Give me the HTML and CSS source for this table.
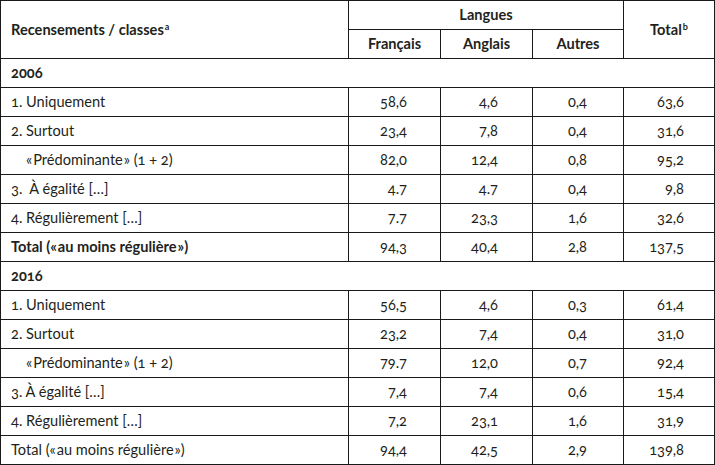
FILE: index.html
```html
<!DOCTYPE html>
<html lang="fr">
<head>
<meta charset="utf-8">
<link rel="stylesheet" href="styles.css">
</head>
<body>
<table class="tbl">
  <colgroup>
    <col class="c-label"><col class="c-num"><col class="c-num"><col class="c-num3"><col class="c-tot">
  </colgroup>
  <thead>
    <tr>
      <th rowspan="2" class="h-label">Recensements / classes<sup>a</sup></th>
      <th colspan="3" class="h-group">Langues</th>
      <th rowspan="2" class="h-total">Total<sup>b</sup></th>
    </tr>
    <tr>
      <th class="h-sub">Français</th>
      <th class="h-sub">Anglais</th>
      <th class="h-sub">Autres</th>
    </tr>
  </thead>
  <tbody>
    <tr class="year"><td colspan="5">2006</td></tr>
    <tr><td class="lbl">1. Uniquement</td><td class="n1">58,6</td><td class="n2">4,6</td><td class="n3">0,4</td><td class="n4">63,6</td></tr>
    <tr><td class="lbl">2. Surtout</td><td class="n1">23,4</td><td class="n2">7,8</td><td class="n3">0,4</td><td class="n4">31,6</td></tr>
    <tr><td class="lbl indent">«&#8202;Prédominante&#8202;» (1 + 2)</td><td class="n1">82,0</td><td class="n2">12,4</td><td class="n3">0,8</td><td class="n4">95,2</td></tr>
    <tr><td class="lbl">3.&nbsp; À égalité […]</td><td class="n1">4.7</td><td class="n2">4.7</td><td class="n3">0,4</td><td class="n4">9,8</td></tr>
    <tr><td class="lbl">4. Régulièrement […]</td><td class="n1">7.7</td><td class="n2">23,3</td><td class="n3">1,6</td><td class="n4">32,6</td></tr>
    <tr class="bold"><td class="lbl">Total («&#8202;au moins régulière&#8202;»)</td><td class="n1">94,3</td><td class="n2">40,4</td><td class="n3">2,8</td><td class="n4">137,5</td></tr>
    <tr class="year"><td colspan="5">2016</td></tr>
    <tr><td class="lbl">1. Uniquement</td><td class="n1">56,5</td><td class="n2">4,6</td><td class="n3">0,3</td><td class="n4">61,4</td></tr>
    <tr><td class="lbl">2. Surtout</td><td class="n1">23,2</td><td class="n2">7,4</td><td class="n3">0,4</td><td class="n4">31,0</td></tr>
    <tr><td class="lbl indent">«&#8202;Prédominante&#8202;» (1 + 2)</td><td class="n1">79.7</td><td class="n2">12,0</td><td class="n3">0,7</td><td class="n4">92,4</td></tr>
    <tr><td class="lbl">3. À égalité […]</td><td class="n1">7,4</td><td class="n2">7,4</td><td class="n3">0,6</td><td class="n4">15,4</td></tr>
    <tr><td class="lbl">4. Régulièrement […]</td><td class="n1">7,2</td><td class="n2">23,1</td><td class="n3">1,6</td><td class="n4">31,9</td></tr>
    <tr><td class="lbl">Total («&#8202;au moins régulière&#8202;»)</td><td class="n1">94,4</td><td class="n2">42,5</td><td class="n3">2,9</td><td class="n4">139,8</td></tr>
  </tbody>
</table>
</body>
</html>
```
FILE: styles.css
```css
html, body {
  margin: 0;
  padding: 0;
  background: #fff;
}
body {
  font-family: Lato, "Open Sans", "Noto Sans", sans-serif;
  font-size: 14.6px;
  color: #231f20;
  font-variant-numeric: oldstyle-nums;
}
.tbl {
  border-collapse: collapse;
  table-layout: fixed;
  width: 714px;
}
.c-label { width: 348px; }
.c-num { width: 92px; }
.c-num3 { width: 91px; }
.c-tot { width: 91px; }
.tbl th, .tbl td {
  border: 1px solid #1a1a1a;
  height: 29px;
  padding: 0;
  box-sizing: border-box;
  line-height: 16px;
}
.tbl th {
  font-weight: bold;
  text-align: center;
}
.tbl th.h-label {
  text-align: left;
  padding-left: 10px;
}
sup {
  font-size: 9px;
  line-height: 0;
  vertical-align: 5px;
  margin-left: 1px;
}
.year td {
  font-weight: bold;
  padding-left: 10px;
}
.lbl {
  padding-left: 10px !important;
}
.lbl.indent {
  padding-left: 25px !important;
}
.bold td {
  font-weight: bold;
}
.bold td.n1, .bold td.n2, .bold td.n3, .bold td.n4 {
  font-weight: normal;
}
.n1, .n2, .n3, .n4 {
  text-align: right;
}
.n1 { padding-right: 33px !important; }
.n2 { padding-right: 34px !important; }
.n3 { padding-right: 36px !important; }
.n4 { padding-right: 30px !important; }
```
